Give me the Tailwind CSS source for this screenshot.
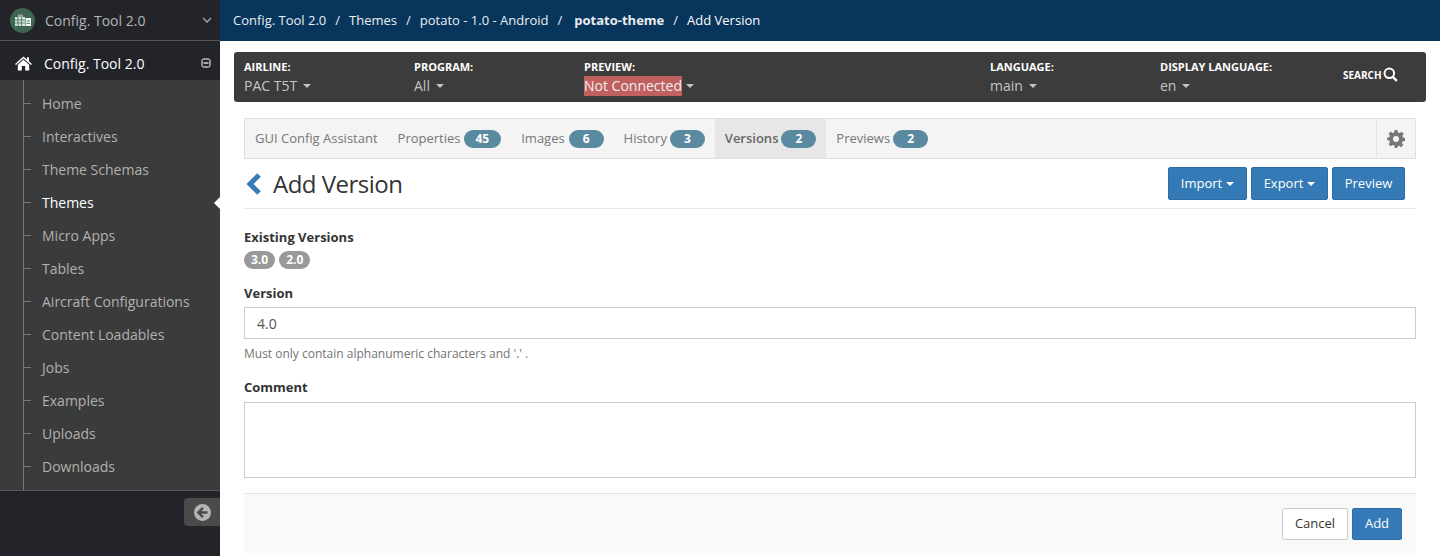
<!doctype html>
<html lang="en">
  <head>
    <meta charset="UTF-8" />
    <title>Add Version</title>
    <script src="https://cdn.jsdelivr.net/npm/@tailwindcss/browser@4"></script>
  </head>
  <body class="font-['Open_Sans',sans-serif] text-[13px] text-[#333] bg-white">
    <div class="flex h-[556px] w-[1440px] overflow-hidden">
      <!-- Sidebar -->
      <aside class="relative flex w-[220px] shrink-0 flex-col bg-[#22242a]">
        <div class="flex h-[41px] items-center border-b border-[#55575a] pl-[10px] pr-[8px]">
          <span class="flex h-[25px] w-[25px] items-center justify-center rounded-full bg-[#3e6650]">
            <svg width="18" height="14" viewBox="0 0 18 14">
              <rect x="1" y="4" width="10" height="9" fill="#cfe3d8" />
              <path d="M1 7h10M1 10h10M4 4v9M7.5 4v9" stroke="#3e6650" stroke-width="0.7" />
              <path d="M4 4V1.5h5V4z" fill="#8fa79a" />
              <rect x="11.5" y="5" width="5.5" height="8" fill="#eef4f0" />
              <path d="M12.5 8h3.5M12.5 10.5h3.5" stroke="#3e6650" stroke-width="0.8" />
            </svg>
          </span>
          <span class="ml-[10px] text-[14px] text-[#b4b4b4]">Config. Tool 2.0</span>
          <svg class="ml-auto" width="10" height="6" viewBox="0 0 10 6" fill="none">
            <path d="M1 1l4 4 4-4" stroke="#a8a8a8" stroke-width="1.3" />
          </svg>
        </div>
        <div class="mt-[5px] flex h-[34px] items-center pl-[15px] pr-[9px] text-white">
          <svg width="17" height="15" viewBox="0 0 17 15">
            <path d="M8.5 0.5L0 8l1 1.1 7.5-6.5 7.5 6.5L17 8l-3-2.7V1.2h-2v2.4z" fill="#fff" />
            <path d="M8.5 3.8L2.8 8.7V14.5h4V10h3.4v4.5h4V8.7z" fill="#fff" />
          </svg>
          <span class="ml-[12px] text-[14px] font-medium">Config. Tool 2.0</span>
          <svg class="ml-auto" width="10" height="10" viewBox="0 0 10 10" fill="none">
            <rect x="1" y="1" width="8" height="8" rx="1.5" stroke="#fff" stroke-width="1" />
            <path d="M2.5 5h5" stroke="#fff" stroke-width="1.2" />
          </svg>
        </div>
        <nav class="relative h-[411px] border-b border-[#55575a] bg-[#3a3b3d] pt-[7px] text-[14px] text-[#b5b0aa]">
          <div class="absolute bottom-0 left-[23px] top-0 w-px bg-[#77787a]"></div>
          <a class="relative flex h-[33px] items-center pl-[42px] before:absolute before:left-[24px] before:top-[16px] before:h-px before:w-[7px] before:bg-[#77787a]">Home</a>
          <a class="relative flex h-[33px] items-center pl-[42px] before:absolute before:left-[24px] before:top-[16px] before:h-px before:w-[7px] before:bg-[#77787a]">Interactives</a>
          <a class="relative flex h-[33px] items-center pl-[42px] before:absolute before:left-[24px] before:top-[16px] before:h-px before:w-[7px] before:bg-[#77787a]">Theme Schemas</a>
          <a class="relative flex h-[33px] items-center pl-[42px] text-white before:absolute before:left-[24px] before:top-[16px] before:h-px before:w-[7px] before:bg-[#77787a]">
            Themes
            <span class="absolute right-0 top-[11px] h-0 w-0 border-y-[6px] border-r-[6px] border-y-transparent border-r-white"></span>
          </a>
          <a class="relative flex h-[33px] items-center pl-[42px] before:absolute before:left-[24px] before:top-[16px] before:h-px before:w-[7px] before:bg-[#77787a]">Micro Apps</a>
          <a class="relative flex h-[33px] items-center pl-[42px] before:absolute before:left-[24px] before:top-[16px] before:h-px before:w-[7px] before:bg-[#77787a]">Tables</a>
          <a class="relative flex h-[33px] items-center pl-[42px] before:absolute before:left-[24px] before:top-[16px] before:h-px before:w-[7px] before:bg-[#77787a]">Aircraft Configurations</a>
          <a class="relative flex h-[33px] items-center pl-[42px] before:absolute before:left-[24px] before:top-[16px] before:h-px before:w-[7px] before:bg-[#77787a]">Content Loadables</a>
          <a class="relative flex h-[33px] items-center pl-[42px] before:absolute before:left-[24px] before:top-[16px] before:h-px before:w-[7px] before:bg-[#77787a]">Jobs</a>
          <a class="relative flex h-[33px] items-center pl-[42px] before:absolute before:left-[24px] before:top-[16px] before:h-px before:w-[7px] before:bg-[#77787a]">Examples</a>
          <a class="relative flex h-[33px] items-center pl-[42px] before:absolute before:left-[24px] before:top-[16px] before:h-px before:w-[7px] before:bg-[#77787a]">Uploads</a>
          <a class="relative flex h-[33px] items-center pl-[42px] before:absolute before:left-[24px] before:top-[16px] before:h-px before:w-[7px] before:bg-[#77787a]">Downloads</a>
        </nav>
        <div class="mt-[7px] ml-auto flex h-[28px] w-[36px] items-center rounded-l-[4px] bg-[#4a4a4a] pl-[10px]">
          <svg width="17" height="17" viewBox="0 0 17 17">
            <circle cx="8.5" cy="8.5" r="8.5" fill="#b4b4b4" />
            <path d="M9 3.8L4.3 8.5 9 13.2M4.6 8.5H13.5" fill="none" stroke="#4a4a4a" stroke-width="2.4" />
          </svg>
        </div>
      </aside>

      <!-- Main -->
      <div class="flex min-w-0 flex-1 flex-col">
        <header class="flex h-[41px] shrink-0 items-center bg-[#08355c] pl-[13px] text-[13px] text-[#e8edf1]">
          <span>Config. Tool 2.0</span>
          <span class="mx-[9px]">/</span>
          <span>Themes</span>
          <span class="mx-[9px]">/</span>
          <span>potato - 1.0 - Android</span>
          <span class="ml-[9px] mr-[12px]">/</span>
          <span class="font-bold">potato-theme</span>
          <span class="mx-[9px]">/</span>
          <span class="text-white">Add Version</span>
        </header>

        <div class="mx-[14px] mt-[11px] flex h-[50px] shrink-0 items-start rounded-[3px] bg-[#3c3c3c] pl-[10px] pt-[8px] text-white">
          <div class="w-[170px]">
            <div class="text-[11px] leading-[14px] font-bold">AIRLINE:</div>
            <div class="mt-[2px] flex items-center text-[14px] leading-[20px] text-[#c4c4c4]">PAC T5T<i class="ml-[6px] h-0 w-0 border-x-[4px] border-t-[4px] border-x-transparent border-t-[#c4c4c4]"></i></div>
          </div>
          <div class="w-[170px]">
            <div class="text-[11px] leading-[14px] font-bold">PROGRAM:</div>
            <div class="mt-[2px] flex items-center text-[14px] leading-[20px] text-[#c4c4c4]">All<i class="ml-[6px] h-0 w-0 border-x-[4px] border-t-[4px] border-x-transparent border-t-[#c4c4c4]"></i></div>
          </div>
          <div class="w-[406px]">
            <div class="text-[11px] leading-[14px] font-bold">PREVIEW:</div>
            <div class="mt-[2px] flex items-center text-[14px] leading-[20px] text-[#eee]"><span class="bg-[#c0605f]">Not Connected</span><i class="ml-[4px] h-0 w-0 border-x-[4px] border-t-[4px] border-x-transparent border-t-[#c4c4c4]"></i></div>
          </div>
          <div class="w-[170px]">
            <div class="text-[11px] leading-[14px] font-bold">LANGUAGE:</div>
            <div class="mt-[2px] flex items-center text-[14px] leading-[20px] text-[#c4c4c4]">main<i class="ml-[6px] h-0 w-0 border-x-[4px] border-t-[4px] border-x-transparent border-t-[#c4c4c4]"></i></div>
          </div>
          <div class="w-[183px]">
            <div class="text-[11px] leading-[14px] font-bold">DISPLAY LANGUAGE:</div>
            <div class="mt-[2px] flex items-center text-[14px] leading-[20px] text-[#c4c4c4]">en<i class="ml-[6px] h-0 w-0 border-x-[4px] border-t-[4px] border-x-transparent border-t-[#c4c4c4]"></i></div>
          </div>
          <div class="mt-[7px] flex items-center text-[10px] leading-[14px] font-bold">
            SEARCH
            <svg class="ml-[1px]" width="15" height="15" viewBox="0 0 15 15" fill="none">
              <circle cx="6.3" cy="6.3" r="4.8" stroke="#fff" stroke-width="2" />
              <path d="M9.8 9.8l4 4" stroke="#fff" stroke-width="2.4" />
            </svg>
          </div>
        </div>

        <div class="mx-[24px] mt-[16px] flex flex-1 flex-col">
          <nav class="flex h-[41px] shrink-0 items-stretch border border-[#e0e0e0] bg-[#f4f4f4] text-[13px] text-[#777]">
            <a class="flex items-center px-[10px]">GUI Config Assistant</a>
            <a class="flex items-center px-[10px]">Properties<span class="ml-[3px] h-[18px] rounded-full bg-[#5a8a9f] px-[12px] text-[12px] leading-[18px] font-bold text-white">45</span></a>
            <a class="flex items-center px-[10px]">Images<span class="ml-[4px] h-[18px] rounded-full bg-[#5a8a9f] px-[14px] text-[12px] leading-[18px] font-bold text-white">6</span></a>
            <a class="flex items-center px-[10px]">History<span class="ml-[3px] h-[18px] rounded-full bg-[#5a8a9f] px-[14px] text-[12px] leading-[18px] font-bold text-white">3</span></a>
            <a class="flex items-center bg-[#e7e7e7] px-[10px] font-semibold text-[#666]">Versions<span class="ml-[3px] h-[18px] rounded-full bg-[#5a8a9f] px-[14px] text-[12px] leading-[18px] font-bold text-white">2</span></a>
            <a class="flex items-center px-[10px]">Previews<span class="ml-[3px] h-[18px] rounded-full bg-[#5a8a9f] px-[14px] text-[12px] leading-[18px] font-bold text-white">2</span></a>
            <a class="ml-auto flex w-[39px] items-center justify-center border-l border-[#e4e4e4]">
              <svg width="18" height="18" viewBox="0 0 24 24">
                <path fill="#777" fill-rule="evenodd" d="M10 0h4l.7 3.3 2 .8L19.500 2.300l2.800 2.800-1.800 2.800.8 2L24 10.600v4l-3.300.7-.8 2 1.800 2.800-2.800 2.800-2.800-1.800-2 .8L13.400 24h-3l-.7-3.300-2-.8-2.800 1.800-2.800-2.800 1.800-2.800-.8-2L0 13.400v-3l3.100-.7.800-2L2.100 4.900l2.800-2.800 2.800 1.800 2-.8zM12 8a4 4 0 1 0 0 8 4 4 0 0 0 0-8z" />
              </svg>
            </a>
          </nav>

          <div class="flex h-[50px] shrink-0 items-center border-b border-[#e9e9e9] pl-[2px] pr-[11px]">
            <svg width="16" height="22" viewBox="0 0 16 22"><path d="M13 2L4 11l9 9" fill="none" stroke="#337ab7" stroke-width="5" /></svg>
            <h1 class="ml-[11px] text-[24px] leading-none tracking-[-0.5px] text-[#333]">Add Version</h1>
            <div class="ml-auto flex gap-[4px] text-[13px] text-white">
              <button class="flex h-[33px] w-[79px] items-center justify-center rounded-[2px] border border-[#2e6da4] bg-[#337ab7]">Import<i class="ml-[4px] h-0 w-0 border-x-[4px] border-t-[4px] border-x-transparent border-t-white"></i></button>
              <button class="flex h-[33px] w-[77px] items-center justify-center rounded-[2px] border border-[#2e6da4] bg-[#337ab7]">Export<i class="ml-[4px] h-0 w-0 border-x-[4px] border-t-[4px] border-x-transparent border-t-white"></i></button>
              <button class="flex h-[33px] w-[73px] items-center justify-center rounded-[2px] border border-[#2e6da4] bg-[#337ab7]">Preview</button>
            </div>
          </div>

          <form class="flex flex-1 flex-col pt-[19px]">
            <label class="text-[13px] leading-[18px] font-bold">Existing Versions</label>
            <div class="mt-[5px] flex h-[18px] gap-[4px] text-[12px] leading-[18px] font-bold text-white">
              <span class="rounded-full bg-[#999] px-[7px]">3.0</span>
              <span class="rounded-full bg-[#999] px-[7px]">2.0</span>
            </div>
            <label class="mt-[15px] text-[13px] leading-[18px] font-bold">Version</label>
            <input class="mt-[5px] h-[32px] shrink-0 border border-[#ccc] px-[12px] text-[14px] text-[#555]" value="4.0" />
            <p class="mt-[6px] text-[12px] leading-[18px] text-[#737373]">Must only contain alphanumeric characters and '.' .</p>
            <label class="mt-[15px] text-[13px] leading-[18px] font-bold">Comment</label>
            <textarea class="mt-[6px] h-[76px] shrink-0 resize-none border border-[#ccc]"></textarea>
            <div class="mt-[15px] flex h-[60px] shrink-0 items-center justify-end gap-[4px] border-t border-[#e5e5e5] bg-[#f9f9f9] pr-[14px]">
              <button class="h-[32px] w-[66px] rounded-[2px] border border-[#ccc] bg-white text-[#333]">Cancel</button>
              <button class="h-[32px] w-[50px] rounded-[2px] border border-[#2e6da4] bg-[#337ab7] text-white">Add</button>
            </div>
          </form>
        </div>
      </div>
    </div>
  </body>
</html>
